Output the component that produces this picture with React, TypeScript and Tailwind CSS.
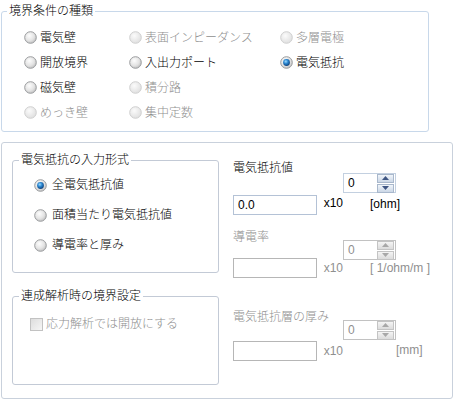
import React from 'react';

const font = "font-['Liberation_Sans','Noto_Sans_CJK_JP',sans-serif] font-light";

const Radio: React.FC<{ checked?: boolean; disabled?: boolean }> = ({ checked, disabled }) => (
  <svg width="13" height="13" viewBox="0 0 13 13" className="shrink-0">
    <defs>
      <radialGradient id="rb-on" cx="0.4" cy="0.35" r="0.7">
        <stop offset="0" stopColor="#fdfdfd" />
        <stop offset="0.6" stopColor="#e3e3e3" />
        <stop offset="1" stopColor="#bdbdbd" />
      </radialGradient>
      <radialGradient id="rb-dis" cx="0.4" cy="0.35" r="0.7">
        <stop offset="0" stopColor="#fbfbfb" />
        <stop offset="1" stopColor="#dedede" />
      </radialGradient>
      <radialGradient id="rb-dot" cx="0.4" cy="0.35" r="0.7">
        <stop offset="0" stopColor="#9fdcff" />
        <stop offset="0.45" stopColor="#2a86d0" />
        <stop offset="1" stopColor="#0b3a72" />
      </radialGradient>
    </defs>
    <circle
      cx="6.5"
      cy="6.5"
      r="5.8"
      fill={disabled ? 'url(#rb-dis)' : 'url(#rb-on)'}
      stroke={disabled ? '#cfcfcf' : '#9a9c9e'}
      strokeWidth="1"
    />
    {checked && <circle cx="6.5" cy="6.5" r="3.4" fill="url(#rb-dot)" />}
  </svg>
);

const Option: React.FC<{ label: string; checked?: boolean; disabled?: boolean; gap?: string }> = ({
  label,
  checked,
  disabled,
  gap = 'gap-[3px]',
}) => (
  <div className={`flex items-center ${gap}`}>
    <Radio checked={checked} disabled={disabled} />
    <span className={`text-[12px] leading-[16px] ${disabled ? 'text-[#8f8f8f]' : 'text-black'}`}>{label}</span>
  </div>
);

const Arrow: React.FC<{ up?: boolean; disabled?: boolean }> = ({ up, disabled }) => (
  <div
    className={`flex h-[9px] w-[17px] items-center justify-center border ${
      disabled
        ? 'border-[#c4c4c4] bg-gradient-to-b from-[#f4f4f4] to-[#dcdcdc]'
        : 'border-[#a9b8cc] bg-gradient-to-b from-[#f1f5fa] to-[#cbd7e6]'
    }`}
  >
    <svg width="7" height="4" viewBox="0 0 7 4">
      <path d={up ? 'M0 4 L3.5 0 L7 4 Z' : 'M0 0 L3.5 4 L7 0 Z'} fill={disabled ? '#a8a8a8' : '#3f5683'} />
    </svg>
  </div>
);

const Spinner: React.FC<{ disabled?: boolean }> = ({ disabled }) => (
  <div
    className={`flex h-[20px] w-[53px] items-center justify-between border pr-[1px] ${
      disabled ? 'border-[#c2c2c2]' : 'border-[#c3d0e0]'
    }`}
  >
    <span className={`pl-[4px] text-[12px] leading-[16px] ${disabled ? 'text-[#8f8f8f]' : 'text-black'}`}>0</span>
    <div className="flex flex-col gap-px">
      <Arrow up disabled={disabled} />
      <Arrow disabled={disabled} />
    </div>
  </div>
);

type GroupProps = {
  label: string;
  value?: string;
  unit: string;
  disabled?: boolean;
  spinTop: string;
  inputTop: string;
  x10Shift?: string;
  unitLeft: string;
  unitTop: string;
  className?: string;
};

const ValueGroup: React.FC<GroupProps> = ({
  label,
  value,
  unit,
  disabled,
  spinTop,
  inputTop,
  x10Shift = '',
  unitLeft,
  unitTop,
  className = '',
}) => {
  const tone = disabled ? 'text-[#8f8f8f]' : 'text-black';
  return (
    <div className={`flex ${className}`}>
      <div className="flex w-[110px] flex-col">
        <span className={`text-[12px] leading-[16px] ${tone}`}>{label}</span>
        <div className={`flex items-center ${inputTop}`}>
          <div
            className={`flex h-[20px] w-[87px] items-center border pl-[4px] ${
              disabled ? 'border-[#b6b6b6]' : 'border-[#b4c2d6]'
            }`}
          >
            <span className="text-[12px] leading-[16px] text-black">{value}</span>
          </div>
          <span className={`ml-[7px] text-[12px] leading-[16px] ${tone} ${x10Shift}`}>x10</span>
        </div>
      </div>
      <div className={`flex flex-col ${spinTop}`}>
        <Spinner disabled={disabled} />
        <span className={`whitespace-nowrap text-[12px] leading-[16px] ${tone} ${unitLeft} ${unitTop}`}>{unit}</span>
      </div>
    </div>
  );
};

export default function App() {
  return (
    <div className={`h-[402px] w-[458px] overflow-hidden bg-white ${font}`}>
      <fieldset className="ml-[1px] mt-[3px] h-[129px] w-[428px] rounded-[3px] border border-[#c8d8ea]">
        <legend className="ml-[5px] px-[2px] text-[12px] leading-[16px] text-black">境界条件の種類</legend>
        <div className="grid grid-cols-[105px_151px_1fr] grid-rows-[25px_25px_25px_25px] items-center pl-[22px] pt-[6px]">
          <Option label="電気壁" />
          <Option label="表面インピーダンス" disabled />
          <Option label="多層電極" disabled />
          <Option label="開放境界" />
          <Option label="入出力ポート" />
          <Option label="電気抵抗" checked />
          <Option label="磁気壁" />
          <Option label="積分路" disabled />
          <div />
          <Option label="めっき壁" disabled />
          <Option label="集中定数" disabled />
          <div />
        </div>
      </fieldset>

      <div className="ml-[1px] mt-[10px] flex h-[257px] w-[452px] rounded-[3px] border border-[#c9d1dc]">
        <div className="flex flex-col pl-[10px] pt-[9px]">
          <fieldset className="h-[121px] w-[207px] rounded-[3px] border border-[#c3cad6]">
            <legend className="ml-[6px] px-[2px] text-[12px] leading-[16px] text-black">電気抵抗の入力形式</legend>
            <div className="flex flex-col pl-[21px] pt-[2px]">
              <div className="flex h-[30px] items-center">
                <Option label="全電気抵抗値" checked gap="gap-[5px]" />
              </div>
              <div className="flex h-[30px] items-center">
                <Option label="面積当たり電気抵抗値" gap="gap-[5px]" />
              </div>
              <div className="flex h-[30px] items-center">
                <Option label="導電率と厚み" gap="gap-[5px]" />
              </div>
            </div>
          </fieldset>

          <fieldset className="mt-[15px] h-[97px] w-[207px] rounded-[3px] border border-[#c3cad6]">
            <legend className="ml-[6px] px-[2px] text-[12px] leading-[16px] text-black">連成解析時の境界設定</legend>
            <div className="flex items-center gap-[3px] pl-[17px] pt-[12px]">
              <svg width="13" height="13" viewBox="0 0 13 13" className="shrink-0">
                <defs>
                  <linearGradient id="cb-dis" x1="0" y1="0" x2="1" y2="1">
                    <stop offset="0" stopColor="#dcdcdc" />
                    <stop offset="1" stopColor="#f7f7f7" />
                  </linearGradient>
                </defs>
                <rect x="0.5" y="0.5" width="12" height="12" fill="url(#cb-dis)" stroke="#c2c2c2" />
              </svg>
              <span className="text-[12px] leading-[16px] text-[#8f8f8f]">応力解析では開放にする</span>
            </div>
          </fieldset>
        </div>

        <div className="ml-[14px] flex flex-col pt-[17px]">
          <ValueGroup
            label="電気抵抗値"
            value="0.0"
            unit="[ohm]"
            spinTop="pt-[13px]"
            inputTop="mt-[19px]"
            x10Shift="-mt-[5px]"
            unitLeft="ml-[27px]"
            unitTop="mt-[3px]"
          />
          <ValueGroup
            className="mt-[14px]"
            label="導電率"
            unit="[ 1/ohm/m ]"
            disabled
            spinTop="pt-[11px]"
            inputTop="mt-[13px]"
            unitLeft="ml-[27px]"
            unitTop="mt-0"
          />
          <ValueGroup
            className="mt-[31px]"
            label="電気抵抗層の厚み"
            unit="[mm]"
            disabled
            spinTop="pt-[11px]"
            inputTop="mt-[16px]"
            unitLeft="ml-[53px]"
            unitTop="mt-[2px]"
          />
        </div>
      </div>
    </div>
  );
}
